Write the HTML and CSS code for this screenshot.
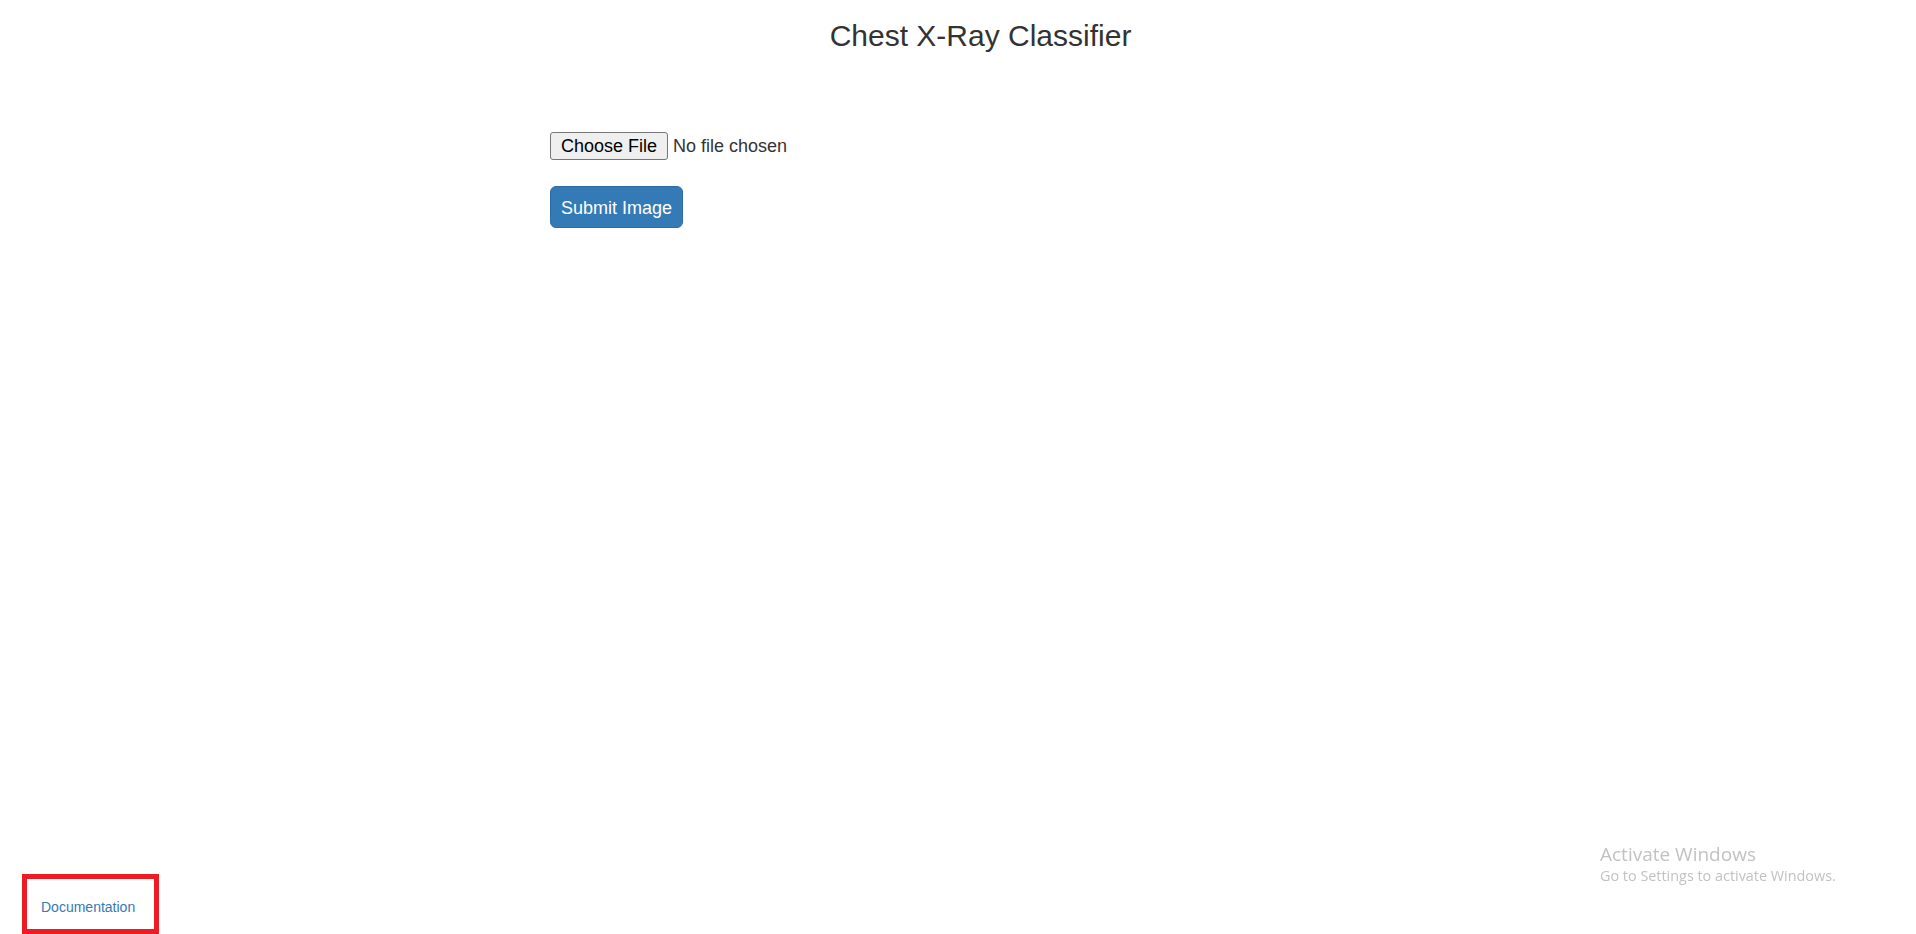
FILE: index.html
```html
<!DOCTYPE html>
<html lang="en">
<head>
<meta charset="utf-8">
<title>Chest X-Ray Classifier</title>
<link rel="stylesheet" href="styles.css">
</head>
<body>
  <h2 class="title">Chest X-Ray Classifier</h2>
  <form class="upload">
    <input class="file" type="file" name="file">
    <button class="submit" type="button">Submit Image</button>
  </form>
  <footer class="footer">
    <div class="doc"><a class="doc-link" href="#">Documentation</a></div>
  </footer>
  <div class="watermark">
    <div class="wm-title">Activate Windows</div>
    <div class="wm-sub">Go to Settings to activate Windows.</div>
  </div>
</body>
</html>
```

FILE: styles.css
```css
html, body {
  margin: 0;
  padding: 0;
}

body {
  font-family: "Liberation Sans", Arial, sans-serif;
  color: #333;
  background: #fff;
  min-height: 100vh;
  display: flex;
  flex-direction: column;
}

.title {
  margin: 19px 0 0;
  padding-left: 45px;
  font-size: 30px;
  line-height: 33px;
  font-weight: 400;
  text-align: center;
}

.upload {
  margin: 80px 0 0 550px;
  display: flex;
  flex-direction: column;
  align-items: flex-start;
  gap: 26px;
}

.file {
  font-family: "Liberation Sans", Arial, sans-serif;
  font-size: 18px;
  color: #333;
  height: 28px;
  padding: 0;
  margin: 0;
}

.file::file-selector-button {
  font: inherit;
  color: #000;
  height: 28px;
  padding: 0 10px;
  margin: 0 5px 0 0;
  border: 1px solid #767676;
  border-radius: 3px;
  background: #efefef;
}

.submit {
  font-family: "Liberation Sans", Arial, sans-serif;
  font-size: 18px;
  line-height: 20px;
  color: #fff;
  background: #337ab7;
  border: 1px solid #2e6da4;
  border-radius: 6px;
  padding: 11px 10px 9px;
  margin: 0;
  cursor: pointer;
}

.footer {
  margin-top: auto;
  display: flex;
}

.doc {
  box-sizing: border-box;
  margin-left: 22px;
  width: 137px;
  height: 60px;
  border: 5px solid #ed1c24;
  padding: 18px 0 0 14px;
}

.doc-link {
  font-size: 14px;
  line-height: 20px;
  color: #337ab7;
  text-decoration: none;
}

.watermark {
  position: fixed;
  left: 1600px;
  top: 842px;
  color: #c2c2c2;
  font-family: "Open Sans", "Noto Sans", sans-serif;
  pointer-events: none;
}

.wm-title {
  font-size: 19px;
  line-height: 24px;
}

.wm-sub {
  font-size: 14.4px;
  line-height: 20px;
}
```
